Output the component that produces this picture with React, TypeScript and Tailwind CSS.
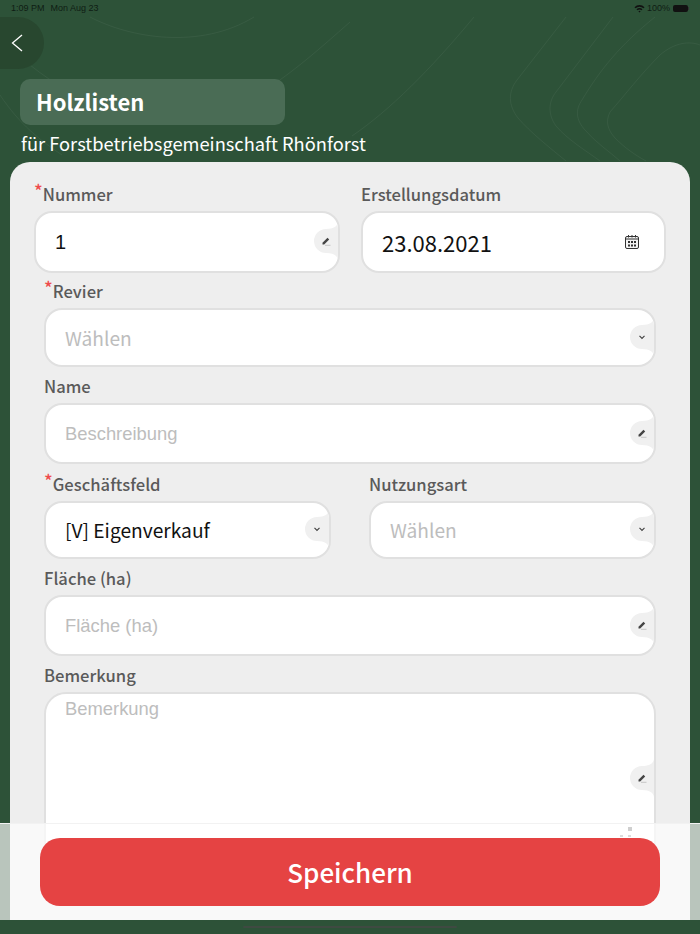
import type { ReactNode } from 'react';

const cjk = "font-['Noto_Sans_CJK_SC','Noto_Sans',sans-serif]";
const arial = "font-['Liberation_Sans',Arial,sans-serif]";

const Notch = ({ children }: { children: ReactNode }) => (
  <div className="absolute right-0 top-[calc(50%-1px)] h-[38px] w-[24px] -translate-y-1/2">
    <svg viewBox="0 0 24 38" className="absolute inset-0 h-full w-full">
      <path d="M24 0C23.500 4 20 7 12 7A12 12 0 0 0 12 31C20 31 23.500 34 24 38Z" fill="#f0f0f0" />
    </svg>
    <div className="absolute left-[7px] top-[14px] flex h-[10px] w-[10px] items-center justify-center">{children}</div>
  </div>
);

const Pencil = () => (
  <svg viewBox="0 0 10 10" className="h-[10px] w-[10px]">
    <path d="M1.500 6.800L6.500 1.800L8.200 3.500L3.200 8.500H1.500Z" fill="#444" />
    <path d="M4 9.300H9.500" stroke="#b5b5b5" strokeWidth="0.7" />
  </svg>
);

const Chevron = () => (
  <svg viewBox="0 0 10 10" className="h-[10px] w-[10px]">
    <path d="M2.500 3.800L5 6.300L7.500 3.800" fill="none" stroke="#444" strokeWidth="1.200" />
  </svg>
);

const CalendarIcon = () => (
  <svg viewBox="0 0 16 16" className="h-[16px] w-[16px]">
    <rect x="1.500" y="2.500" width="13" height="12" rx="1.500" fill="#f4f4f4" stroke="#333" strokeWidth="1" />
    <path d="M1.500 5H14.500" stroke="#333" strokeWidth="1" />
    <path d="M4.500 1V3.500M8 1V3.500M11.500 1V3.500" stroke="#333" strokeWidth="1" />
    <path d="M4 7h2v2H4zM7 7h2v2H7zM10 7h2v2h-2zM4 10.500h2v2H4zM7 10.500h2v2H7zM10 10.500h2v2h-2z" fill="#333" />
  </svg>
);

const Label = ({ text, required }: { text: string; required?: boolean }) => (
  <div className="h-[24px] text-[16.600px] font-medium leading-[22px] text-[#5a5a5a]">
    {required && <span className="relative -top-[3px] text-[18px] leading-none text-[#ef4b4b]">*</span>}
    {text}
  </div>
);

interface FieldProps {
  label: string;
  required?: boolean;
  value?: string;
  placeholder?: string;
  icon: ReactNode;
  height: string;
  textClass: string;
  className?: string;
}

const Field = ({ label, required, value, placeholder, icon, height, textClass, className }: FieldProps) => (
  <div className={`flex flex-col gap-[4px] ${className ?? ''}`}>
    <Label text={label} required={required} />
    <div className={`relative flex items-center overflow-hidden rounded-[18px] border-2 border-[#e0e0e0] bg-white pl-[19px] ${height}`}>
      <span className={`${textClass} ${value ? 'text-[#111]' : 'text-[#bdbdbd]'}`}>{value ?? placeholder}</span>
      {icon}
    </div>
  </div>
);

const Contours = () => (
  <svg viewBox="0 0 700 934" className="absolute inset-0 h-full w-full" fill="none" stroke="#fff" strokeOpacity="0.05" strokeWidth="1">
    <path d="M90 17C130 38 200 50 254 17" />
    <path d="M30 65C80 105 130 119 175 119C240 119 290 75 350 22" />
    <path d="M0 95C20 125 40 140 62 155" />
    <path d="M474 17C430 70 390 110 352 136" />
    <path d="M566 17L517 80C508 92 508 105 518 118C530 132 550 148 566 161" />
    <path d="M613 17L556 92C548 102 548 115 556 126C568 140 585 150 600 161" />
    <path d="M655 17C620 45 600 70 582 100C575 110 576 120 585 130C595 142 610 152 620 161" />
    <path d="M700 45C690 41 675 42 660 55C640 75 625 95 610 112C605 122 608 130 615 138C625 148 635 155 646 161" />
  </svg>
);

const selectText = 'pt-[1px] text-[19.200px]';
const plainText = `${arial} text-[18.400px]`;

export default function App() {
  return (
    <div className={`${cjk} relative flex h-[934px] w-[700px] flex-col overflow-hidden bg-[#2d5238]`}>
      <Contours />

      <div className={`${arial} relative flex h-[17px] items-center justify-between px-[11px] text-[9px] text-[#0f1d14]`}>
        <div className="flex gap-[6px]">
          <span>1:09 PM</span>
          <span>Mon Aug 23</span>
        </div>
        <div className="flex items-center gap-[2px]">
          <svg viewBox="0 0 12 9" className="h-[9px] w-[11px]">
            <path d="M0.500 3A8 8 0 0 1 11.500 3L10.300 4.300A6.200 6.200 0 0 0 1.700 4.300ZM2.700 5.300A5 5 0 0 1 9.300 5.300L8.100 6.500A3.200 3.200 0 0 0 3.900 6.500ZM4.800 7.500A1.800 1.800 0 0 1 7.200 7.500L6 8.800Z" fill="#111" />
          </svg>
          <span>100%</span>
          <div className="ml-[1px] flex items-center">
            <div className="h-[7px] w-[15px] rounded-[2px] bg-[#111]" />
            <div className="h-[3px] w-[1px] bg-[#333]" />
          </div>
        </div>
      </div>

      <div className="relative flex h-[52px] w-[44px] items-center rounded-r-[26px] bg-[#28472f] pl-[11px]">
        <svg viewBox="0 0 12 18" className="h-[18px] w-[12px]">
          <path d="M11 1L1.500 9L11 17" fill="none" stroke="#fff" strokeWidth="1.300" />
        </svg>
      </div>

      <div className="relative ml-[20px] mt-[10px] flex h-[46px] w-[265px] items-center rounded-[10px] bg-[#4a6c55] pb-[2px] pl-[16px]">
        <span className="text-[22px] font-bold text-white">Holzlisten</span>
      </div>
      <div className="relative ml-[21px] mt-[2px] h-[35px] text-[18.300px] leading-[32px] text-white">
        für Forstbetriebsgemeinschaft Rhönforst
      </div>

      <div className="relative mx-[10px] mb-[14px] flex-1 overflow-hidden rounded-t-[20px] bg-[#eeeeee]">
        <div className="flex gap-[21px] px-[24px] pt-[21px]">
          <Field label="Nummer" required value="1" textClass={`${arial} text-[20px]`} icon={<Notch><Pencil /></Notch>} height="h-[62px]" className="w-[306px]" />
          <Field label="Erstellungsdatum" value="23.08.2021" textClass="text-[22px]" height="h-[62px]" className="w-[305px]"
            icon={<div className="absolute right-[24px] top-1/2 -translate-y-1/2"><CalendarIcon /></div>} />
        </div>
        <div className="flex flex-col gap-[8px] px-[34px] pt-[7px]">
          <Field label="Revier" required placeholder="Wählen" textClass={selectText} icon={<Notch><Chevron /></Notch>} height="h-[59px]" />
          <Field label="Name" placeholder="Beschreibung" textClass={plainText} icon={<Notch><Pencil /></Notch>} height="h-[61px]" />
          <div className="mt-[1px] flex gap-[38px]">
            <Field label="Geschäftsfeld" required value="[V] Eigenverkauf" textClass={selectText} icon={<Notch><Chevron /></Notch>} height="h-[58px]" className="w-[287px]" />
            <Field label="Nutzungsart" placeholder="Wählen" textClass={selectText} icon={<Notch><Chevron /></Notch>} height="h-[58px]" className="w-[287px]" />
          </div>
          <Field label="Fläche (ha)" placeholder="Fläche (ha)" textClass={plainText} icon={<Notch><Pencil /></Notch>} height="h-[61px]" />
          <div className="flex flex-col gap-[4px]">
            <Label text="Bemerkung" />
            <div className="relative h-[174px] rounded-[22px] border-2 border-[#e0e0e0] bg-white pl-[19px] pt-[1px]">
              <span className={`${plainText} text-[#bdbdbd]`}>Bemerkung</span>
              <Notch><Pencil /></Notch>
            </div>
          </div>
        </div>
      </div>

      <div className="absolute bottom-[14px] left-0 right-0 flex h-[97px] items-center justify-center border-t border-[#f2f2f2] bg-white/[0.667]">
        <div className="absolute left-[628px] top-[3px] h-[4px] w-[4px] bg-[#cfcfcf]" />
        <div className="absolute left-[620px] top-[11px] h-[2px] w-[3px] bg-[#dcdcdc]" />
        <div className="absolute left-[628px] top-[11px] h-[2px] w-[3px] bg-[#dcdcdc]" />
        <button className="relative flex h-[68px] w-[620px] items-center justify-center rounded-[20px] bg-[#e54343] pb-[2px] text-[26px] font-medium text-white">
          Speichern
        </button>
      </div>

      <div className="absolute bottom-[6px] left-[243px] h-[2px] w-[214px] rounded-full bg-[#3f4a42]" />
    </div>
  );
}
